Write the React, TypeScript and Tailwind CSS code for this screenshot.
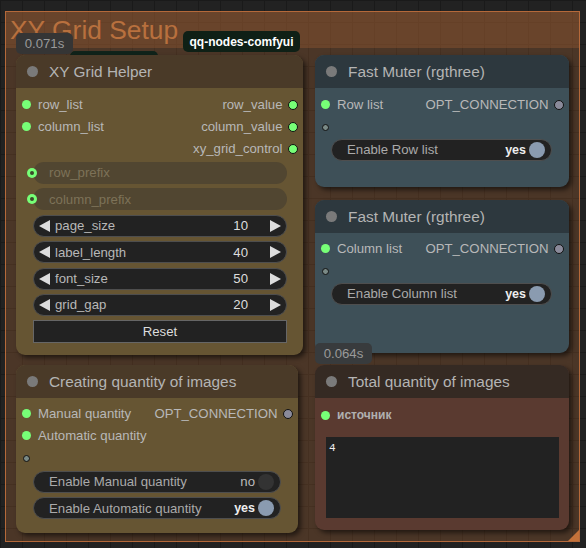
import React from "react";

const SANS = "font-['Liberation_Sans',Arial,sans-serif]";

type NodeProps = {
  pos: string;
  head: string;
  body: string;
  title: string;
  bodyPad: string;
  children: React.ReactNode;
};

function Node({ pos, head, body, title, bodyPad, children }: NodeProps) {
  return (
    <div
      className={`absolute z-10 flex flex-col overflow-hidden rounded-[9px] shadow-[3px_3px_5px_rgba(0,0,0,0.55)] ${pos} ${body}`}
    >
      <div className={`flex h-[33px] shrink-0 items-center ${head}`}>
        <span className="ml-[10.5px] h-[11px] w-[11px] rounded-full bg-[#7a7a7a]" />
        <span className="ml-[11.5px] text-[15.4px] leading-none text-[#b4b4b4]">{title}</span>
      </div>
      <div className={`flex flex-1 flex-col ${bodyPad}`}>{children}</div>
    </div>
  );
}

function InDot() {
  return <span className="ml-[5.5px] h-[9px] w-[9px] rounded-full bg-[#7f7]" />;
}

function OutDot({ gray }: { gray?: boolean }) {
  return (
    <span
      className={`mr-[5.5px] h-[10px] w-[10px] rounded-full border border-[#111] ${gray ? "bg-[#8a8a9a]" : "bg-[#7f7]"}`}
    />
  );
}

function HollowDot() {
  return <span className="ml-[6.5px] h-[7px] w-[7px] rounded-full border border-[#111] bg-[#7a8a86]" />;
}

function RingDot() {
  return (
    <span className="ml-[5.5px] flex h-[10px] w-[10px] items-center justify-center rounded-full bg-[#7f7]">
      <span className="h-[4px] w-[4px] rounded-full bg-[#3a4a2a]" />
    </span>
  );
}

function SlotRow({ left, right }: { left?: React.ReactNode; right?: React.ReactNode }) {
  return (
    <div className="relative top-[1px] flex h-[22px] items-center justify-between text-[13.2px] leading-none text-[#b8b8b8]">
      <div className="flex items-center">{left}</div>
      <div className="flex items-center">{right}</div>
    </div>
  );
}

function Arrow({ dir }: { dir: "l" | "r" }) {
  return (
    <svg width="11" height="12" viewBox="0 0 11 12" className="shrink-0">
      <polygon points={dir === "l" ? "11,0 11,12 0,6" : "0,0 0,12 11,6"} fill="#dddddd" />
    </svg>
  );
}

function NumberWidget({ label, value }: { label: string; value: string }) {
  return (
    <div className="flex h-[22px] items-center rounded-full border border-[#4e4e4e] bg-[#222] text-[13.2px] leading-none">
      <span className="ml-[5px] flex">
        <Arrow dir="l" />
      </span>
      <span className="ml-[5px] text-[#b8b8b8]">{label}</span>
      <span className="ml-auto text-[#dddddd]">{value}</span>
      <span className="ml-[22px] mr-[5px] flex">
        <Arrow dir="r" />
      </span>
    </div>
  );
}

function TextWidget({ label }: { label: string }) {
  return (
    <div className="flex h-[22px] items-center rounded-full bg-[#514631] text-[13.2px] leading-none text-[#7d7258]">
      <span className="ml-[16px]">{label}</span>
    </div>
  );
}

function Toggle({ label, on, cls }: { label: string; on: boolean; cls: string }) {
  return (
    <div
      className={`flex h-[22px] items-center rounded-full border border-[#4e4e4e] bg-[#222] text-[13.2px] leading-none ${cls}`}
    >
      <span className="ml-[15px] text-[#aaaaaa]">{label}</span>
      {on ? (
        <span className="ml-auto text-[12.5px] font-bold text-[#eeeeee]">yes</span>
      ) : (
        <span className="ml-auto text-[#bbbbbb]">no</span>
      )}
      <span className={`ml-[3px] mr-[6px] h-[16px] w-[16px] rounded-full ${on ? "bg-[#8a9bb0]" : "bg-[#333]"}`} />
    </div>
  );
}

function Badge({ text, pos }: { text: string; pos: string }) {
  return (
    <div
      className={`absolute z-20 flex h-[21px] items-center justify-center rounded-[5px] text-[13.2px] leading-none text-[#9a9a9a] ${pos}`}
    >
      {text}
    </div>
  );
}

export default function App() {
  return (
    <div
      className={`relative h-[548px] w-[586px] overflow-hidden bg-[#222222] bg-[linear-gradient(to_right,#1a1a1a_1px,transparent_1px),linear-gradient(to_bottom,#1a1a1a_1px,transparent_1px)] bg-[size:22px_22px] ${SANS}`}
    >
      {/* group frame */}
      <div className="absolute left-[5px] top-[11px] flex h-[531px] w-[575px] flex-col border border-[#b5693a] bg-[rgba(176,102,52,0.29)]">
        <div className="flex h-[36px] items-center bg-[rgba(176,102,52,0.3)] pl-[4px]">
          <span className="text-[26.4px] leading-none text-[#b8703e]">XY Grid Setup</span>
        </div>
        <svg width="11" height="11" viewBox="0 0 11 11" className="absolute bottom-0 right-0">
          <polygon points="11,0 11,11 0,11" fill="#c4723a" />
        </svg>
      </div>

      {/* badges above the helper node */}
      <div className="absolute left-[70px] top-[51px] z-0 h-[8px] w-[88px] rounded-t-[5px] bg-[#10231a]" />
      <Badge text="0.071s" pos="left-[16px] top-[33px] w-[57px] bg-[#353535]" />
      <div className="absolute left-[183px] top-[31px] z-20 flex h-[21px] w-[117px] items-center justify-center rounded-[5px] bg-[#0f2016] text-[12px] font-bold leading-none text-white">
        qq-nodes-comfyui
      </div>

      <Node
        pos="left-[16px] top-[55px] w-[287px] h-[300px]"
        head="bg-[#4a3a28]"
        body="bg-[#665533]"
        title="XY Grid Helper"
        bodyPad="pt-[5px]"
      >
        <SlotRow
          left={
            <>
              <InDot />
              <span className="ml-[7.5px]">row_list</span>
            </>
          }
          right={
            <>
              <span className="mr-[5px]">row_value</span>
              <OutDot />
            </>
          }
        />
        <SlotRow
          left={
            <>
              <InDot />
              <span className="ml-[7.5px]">column_list</span>
            </>
          }
          right={
            <>
              <span className="mr-[5px]">column_value</span>
              <OutDot />
            </>
          }
        />
        <SlotRow
          right={
            <>
              <span className="mr-[5px]">xy_grid_control</span>
              <OutDot />
            </>
          }
        />
        <div className="relative mt-[3px] ml-[17px] mr-[16px] flex flex-col gap-[4.4px]">
          <div className="relative">
            <span className="absolute left-[-12px] top-[6px] flex">
              <RingDot />
            </span>
            <TextWidget label="row_prefix" />
          </div>
          <div className="relative">
            <span className="absolute left-[-12px] top-[6px] flex">
              <RingDot />
            </span>
            <TextWidget label="column_prefix" />
          </div>
          <NumberWidget label="page_size" value="10" />
          <NumberWidget label="label_length" value="40" />
          <NumberWidget label="font_size" value="50" />
          <NumberWidget label="grid_gap" value="20" />
          <div className="flex h-[23px] items-center justify-center border border-[#666] bg-[#222] text-[13.2px] leading-none text-[#dddddd]">
            Reset
          </div>
        </div>
      </Node>

      <Node
        pos="left-[315px] top-[55px] w-[254px] h-[132px]"
        head="bg-[#2d383e]"
        body="bg-[#3e5058]"
        title="Fast Muter (rgthree)"
        bodyPad="pt-[5px]"
      >
        <SlotRow
          left={
            <>
              <InDot />
              <span className="ml-[7.5px]">Row list</span>
            </>
          }
          right={
            <>
              <span className="mr-[5px]">OPT_CONNECTION</span>
              <OutDot gray />
            </>
          }
        />
        <SlotRow left={<HollowDot />} />
        <Toggle label="Enable Row list" on cls="mt-[2px] ml-[16px] mr-[17px]" />
      </Node>

      <Node
        pos="left-[315px] top-[200px] w-[254px] h-[153px]"
        head="bg-[#2d383e]"
        body="bg-[#3e5058]"
        title="Fast Muter (rgthree)"
        bodyPad="pt-[4px]"
      >
        <SlotRow
          left={
            <>
              <InDot />
              <span className="ml-[7.5px]">Column list</span>
            </>
          }
          right={
            <>
              <span className="mr-[5px]">OPT_CONNECTION</span>
              <OutDot gray />
            </>
          }
        />
        <SlotRow left={<HollowDot />} />
        <Toggle label="Enable Column list" on cls="mt-[2px] ml-[16px] mr-[17px]" />
      </Node>

      <Badge text="0.064s" pos="left-[315px] top-[343px] w-[57px] bg-[#383b3d]" />

      <Node
        pos="left-[16px] top-[365px] w-[282px] h-[168px]"
        head="bg-[#4a3a28]"
        body="bg-[#665533]"
        title="Creating quantity of images"
        bodyPad="pt-[4px]"
      >
        <SlotRow
          left={
            <>
              <InDot />
              <span className="ml-[7.5px]">Manual quantity</span>
            </>
          }
          right={
            <>
              <span className="mr-[5px]">OPT_CONNECTION</span>
              <OutDot gray />
            </>
          }
        />
        <SlotRow
          left={
            <>
              <InDot />
              <span className="ml-[7.5px]">Automatic quantity</span>
            </>
          }
        />
        <SlotRow left={<HollowDot />} />
        <div className="mt-[3px] flex flex-col gap-[4.4px]">
          <Toggle label="Enable Manual quantity" on={false} cls="ml-[17px] mr-[17px]" />
          <Toggle label="Enable Automatic quantity" on cls="ml-[17px] mr-[17px]" />
        </div>
      </Node>

      <Node
        pos="left-[315px] top-[365px] w-[254px] h-[165px]"
        head="bg-[#352a23]"
        body="bg-[#5a3a30]"
        title="Total quantity of images"
        bodyPad="pt-[5px]"
      >
        <SlotRow
          left={
            <>
              <InDot />
              <span className="ml-[7.5px] text-[12px] font-bold text-[#b0b0b0]">источник</span>
            </>
          }
        />
        <div className="ml-[11px] mr-[10px] mt-[12px] h-[81px] bg-[#222] px-[3px] pt-[4px] font-['Liberation_Mono',monospace] text-[11px] leading-[14px] text-[#eeeeee]">
          4
        </div>
      </Node>
    </div>
  );
}
